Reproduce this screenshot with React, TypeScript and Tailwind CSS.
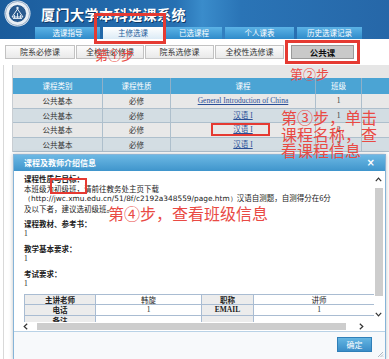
import React from "react";

const cjk = { fontFamily: '"Noto Sans CJK SC", "Noto Sans", sans-serif' };
const serif = { fontFamily: '"Liberation Serif", "Noto Sans CJK SC", serif' };

function Logo() {
  return (
    <svg width="27" height="27" viewBox="0 0 27 27">
      <circle cx="13.5" cy="13.5" r="13" fill="#e9eef4" />
      <circle cx="13.5" cy="13.5" r="12" fill="none" stroke="#7f9cbc" strokeWidth="0.8" />
      <circle cx="13.5" cy="13.5" r="9" fill="#2a5a8e" />
      <circle cx="13.5" cy="13.5" r="9" fill="none" stroke="#ffffff" strokeWidth="0.8" />
      <path d="M8 17 L13.5 9 L19 17 Z" fill="none" stroke="#e6edf5" strokeWidth="1" />
      <path d="M9 18.5 H18 M10.5 15 V18 M13.5 13 V18 M16.5 15 V18" stroke="#e6edf5" strokeWidth="0.9" />
      <circle cx="13.5" cy="8" r="1.2" fill="#e6edf5" />
    </svg>
  );
}

const navTabs = [
  { t: "选课指导", w: "w-[65px]" },
  { t: "主修选课", w: "w-[60px]", active: true },
  { t: "已选课程", w: "w-[56px]" },
  { t: "个人课表", w: "w-[69px]" },
  { t: "历史选课记录", w: "w-[65px]" },
];

const subTabs = [
  { t: "院系必修课", w: "w-[70px]" },
  { t: "全校性必修课", w: "w-[68px]" },
  { t: "院系选修课", w: "w-[69px]" },
  { t: "全校性选修课", w: "w-[69px]" },
];

const rows = [
  { a: "公共基本", b: "必修", c: "General Introduction of China", d: "1", alt: false },
  { a: "公共基本", b: "必修", c: "汉语 I", d: "1", alt: true },
  { a: "公共基本", b: "必修", c: "汉语 I", d: "2", alt: false },
  { a: "公共基本", b: "必修", c: "汉语 I", d: "3", alt: true },
];

export default function App() {
  return (
    <div
      className="relative w-[389px] h-[359px] overflow-hidden bg-white text-[#333]"
      style={cjk}
    >
      {/* Header */}
      <div className="relative h-[39px] bg-[linear-gradient(to_right,#1b5c9c,#2670b2_45%,#3a8ccb_52%,#2a74b6_62%,#2667a8)]">
        <div className="h-[27px] flex items-center pl-[4px] gap-[10px]">
          <Logo />
          <div className="text-[14px] font-bold tracking-[0.5px] text-white leading-none [text-shadow:1px_1px_0_#0d3763]">
            厦门大学本科选课系统
          </div>
        </div>
        <div className="h-[12px] flex pl-[35px] gap-[3px]">
          {navTabs.map((n) => (
            <div
              key={n.t}
              className={
                n.w +
                " h-[12px] flex items-center justify-center text-[7.5px] leading-none " +
                (n.active
                  ? "bg-[linear-gradient(to_bottom,#ffffff,#dcebf6)] text-[#1e5c9a]"
                  : "bg-[linear-gradient(to_bottom,#5cb3e6,#2f8bca)] text-white")
              }
            >
              {n.t}
            </div>
          ))}
        </div>
      </div>

      {/* Sub tabs */}
      <div className="mt-[6px] h-[14px] flex pl-[5px] gap-[1px]">
        {subTabs.map((s) => (
          <div
            key={s.t}
            className={
              s.w +
              " h-[14px] flex items-center justify-center border border-[#c2c2c2] bg-[linear-gradient(to_bottom,#fbfbfb,#e9e9e9)] text-[8px] leading-none text-[#333]"
            }
          >
            {s.t}
          </div>
        ))}
        <div className="ml-[6px] w-[63px] h-[14px] flex items-center justify-center border border-[#9a9a9a] bg-[#c9c9c9] text-[8.5px] font-bold leading-none text-[#111]">
          公共课
        </div>
      </div>

      {/* Body with table */}
      <div className="mt-[6px] ml-[3px] h-[300px] border-l border-[#d9d9d9] pl-[8px]">
        <div className="border-l border-[#c8cdd2]">
          <div className="h-[13px] bg-[#e6e6e6]" />
          <div className="h-[16px] flex bg-[#4ba4d4] text-white text-[7.5px]">
            <div className="w-[90px] flex items-center justify-center border-r border-[#8fb0c8]">课程类别</div>
            <div className="w-[68px] flex items-center justify-center border-r border-[#8fb0c8]">课程性质</div>
            <div className="w-[145px] flex items-center justify-center border-r border-[#8fb0c8]">课程</div>
            <div className="w-[46px] flex items-center justify-center border-r border-[#8fb0c8]">班级</div>
            <div className="flex-1" />
          </div>
          {rows.map((r, i) => (
            <div
              key={i}
              className={
                "h-[14.5px] flex text-[7.5px] border-b border-[#aebfcc] " +
                (r.alt ? "bg-[#d3dde3]" : "bg-[#e8e8e8]")
              }
            >
              <div className="w-[90px] flex items-center justify-center border-r border-[#aebfcc]">{r.a}</div>
              <div className="w-[68px] flex items-center justify-center border-r border-[#aebfcc]">{r.b}</div>
              <div className="w-[145px] flex items-center justify-center border-r border-[#aebfcc]">
                <span className="underline text-[#2a4f97] text-[7.5px]" style={serif}>
                  {r.c}
                </span>
              </div>
              <div className="w-[46px] flex items-center justify-center border-r border-[#aebfcc] text-[7.5px]" style={serif}>
                {r.d}
              </div>
              <div className="flex-1" />
            </div>
          ))}
        </div>
      </div>

      {/* Dialog */}
      <div className="absolute left-[13px] top-[154px] w-[373px] h-[206px] flex flex-col border border-[#86b4d8] bg-white shadow-[0_0_4px_rgba(0,0,0,0.25)]">
        <div className="h-[16px] flex items-center justify-between px-[10px] bg-[linear-gradient(to_bottom,#6cb8e4,#3f95cc)]">
          <span className="text-[8px] font-bold text-white leading-none">课程及教师介绍信息</span>
          <span className="text-[10px] font-bold text-white leading-none" style={{ fontFamily: '"DejaVu Sans", sans-serif' }}>
            ×
          </span>
        </div>
        <div className="flex-1 flex flex-col min-h-0">
          <div className="flex-1 flex min-h-0">
            <div className="flex-1 overflow-hidden pl-[10px] pt-[3px] text-[7.5px] leading-[9.5px] text-[#222]">
              <div className="font-bold">课程性质与目标：</div>
              <div>本班级为初级班，请前往教务处主页下载</div>
              <div className="whitespace-nowrap">
                <span style={{ fontFamily: '"DejaVu Sans", sans-serif' }} className="text-[7.4px]">
                  （http://jwc.xmu.edu.cn/51/8f/c2192a348559/page.htm）
                </span>
                汉语自测题，自测得分在6分
              </div>
              <div>及以下者，建议选初级班。</div>

              <div className="mt-[6px] font-bold">课程教材、参考书：</div>
              <div style={serif}>1</div>
              <div className="mt-[6px] font-bold">教学基本要求：</div>
              <div style={serif}>1</div>
              <div className="mt-[6px] font-bold">考试要求：</div>
              <div style={serif}>1</div>

              <div className="mt-[5.5px] w-[360px] border-t border-l border-[#a9bcd2] text-[7.5px]">
                {[
                  ["主讲老师", "韩旋", "职称", "讲师"],
                  ["电话", "1", "EMAIL", "1"],
                  ["备注", "", "", ""],
                ].map((row, i) => (
                  <div key={i} className="h-[10.5px] flex border-b border-[#a9bcd2]">
                    <div className="w-[71px] flex items-center justify-center border-r border-[#a9bcd2] bg-[#ececec] font-bold">
                      {row[0]}
                    </div>
                    <div className="w-[106px] flex items-center justify-center border-r border-[#a9bcd2]" style={i === 1 ? serif : undefined}>
                      {row[1]}
                    </div>
                    <div
                      className="w-[52px] flex items-center justify-center border-r border-[#a9bcd2] bg-[#ececec] font-bold"
                      style={i === 1 ? serif : undefined}
                    >
                      {row[2]}
                    </div>
                    <div className="flex-1 flex items-center justify-center" style={i === 1 ? serif : undefined}>
                      {row[3]}
                    </div>
                  </div>
                ))}
              </div>
            </div>
            {/* vertical scrollbar */}
            <div className="w-[9px] mr-[2px] flex flex-col">
              <div className="h-[17px] flex items-center justify-center">
                <svg width="7" height="5" viewBox="0 0 7 5">
                  <path d="M0.8 4.2 L3.5 1.2 L6.2 4.2" fill="none" stroke="#333" strokeWidth="1.2" />
                </svg>
              </div>
              <div className="h-[108px] mx-[0.5px] bg-[#cdcdcd]" />
              <div className="flex-1 flex items-end justify-center pb-[5px]">
                <svg width="7" height="5" viewBox="0 0 7 5">
                  <path d="M0.8 0.8 L3.5 3.8 L6.2 0.8" fill="none" stroke="#333" strokeWidth="1.2" />
                </svg>
              </div>
            </div>
          </div>
          {/* horizontal scrollbar */}
          <div className="h-[9px] flex items-center">
            <div className="w-[23px] flex items-center justify-center">
              <svg width="5" height="7" viewBox="0 0 5 7">
                <path d="M4.2 0.8 L1.2 3.5 L4.2 6.2" fill="none" stroke="#333" strokeWidth="1.2" />
              </svg>
            </div>
            <div className="w-[309px] h-[7px] bg-[#cdcdcd]" />
            <div className="w-[30px] flex items-center justify-center">
              <svg width="5" height="7" viewBox="0 0 5 7">
                <path d="M0.8 0.8 L3.8 3.5 L0.8 6.2" fill="none" stroke="#333" strokeWidth="1.2" />
              </svg>
            </div>
          </div>
        </div>
        <div className="relative h-[28px] border-t border-[#b9d2e6] bg-[#f7f9fb] flex justify-end items-start pt-[5px] pr-[13px]">
          <div className="w-[35px] h-[15px] flex items-center justify-center border border-[#2f7fb8] bg-[linear-gradient(to_bottom,#63b5e2,#3a8dc8)] text-white text-[8px] leading-none">
            确定
          </div>
          <svg className="absolute right-[1px] bottom-[1px]" width="7" height="7" viewBox="0 0 7 7">
            <path d="M6 1 L1 6 M6 3.5 L3.5 6 M6 5.5 L5.5 6" stroke="#9aa7b3" strokeWidth="0.8" />
          </svg>
        </div>
      </div>

      {/* Annotations */}
      <div className="absolute left-[94px] top-[13px] w-[72px] h-[31px] border-[3px] border-[#e53a32]" />
      <div className="absolute left-[95px] top-[48px] text-[13px] leading-none text-[#e94a44]">第①步</div>
      <div className="absolute left-[285px] top-[40px] w-[75px] h-[24px] border-[3px] border-[#e53a32]" />
      <div className="absolute left-[290px] top-[67px] text-[13px] leading-none text-[#e94a44]">第②步</div>
      <div className="absolute left-[211px] top-[123px] w-[59px] h-[13px] border-[2.5px] border-[#e53a32]" />
      <div className="absolute left-[281px] top-[109px] text-[16px] leading-[16.5px] text-[#e94a44]">
        <div>第③步，单击</div>
        <div>课程名称，查</div>
        <div>看课程信息</div>
      </div>
      <div className="absolute left-[50px] top-[178px] w-[37px] h-[16px] border-[2.5px] border-[#e53a32]" />
      <div className="absolute left-[108px] top-[205px] text-[16px] leading-none text-[#e94a44]">
        第④步，查看班级信息
      </div>
    </div>
  );
}
